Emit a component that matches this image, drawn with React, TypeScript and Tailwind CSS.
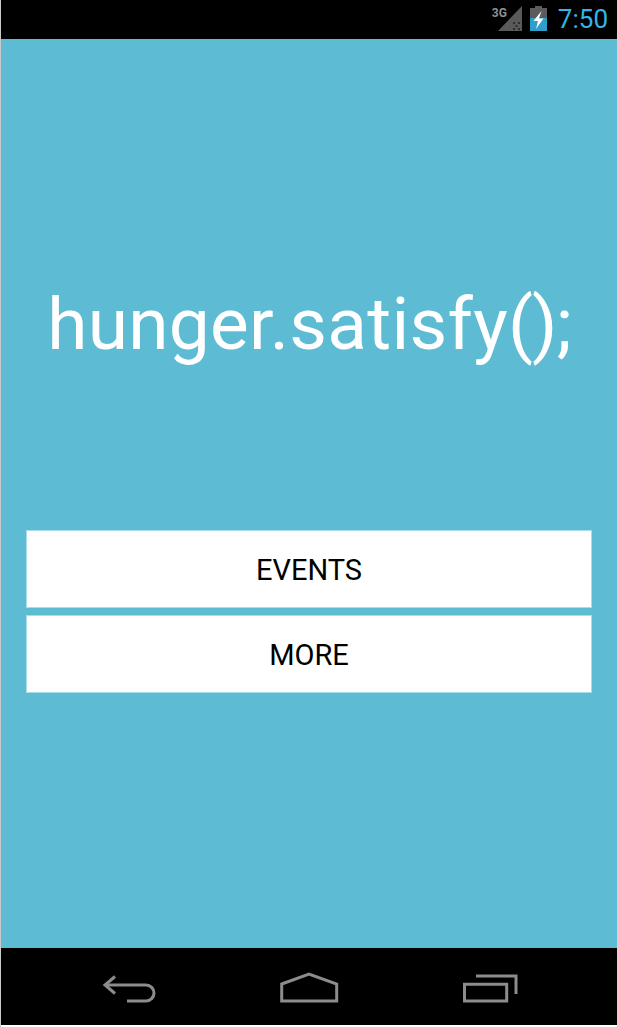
import React from 'react';

const StatusBar: React.FC = () => (
  <div className="h-[39px] bg-black flex items-start justify-end shrink-0">
    <div className="relative w-[30px] h-[30px] mt-[4px] mr-[7px]">
      <svg className="absolute inset-0" width="30" height="30" viewBox="0 0 30 30">
        <path d="M5 27 L29 2 V27 Z" fill="#5a5a5a" />
        <path d="M20 18h2v2h-2zM25 18h2v2h-2zM22.500 21h2v2h-2zM20 24h2v2h-2zM25 24h2v2h-2z" fill="#2e2e2e" />
      </svg>
      <span className="absolute left-[-1px] top-[2px] text-[12px] leading-[14px] font-bold text-[#8f8f8f]">3G</span>
    </div>
    <svg className="mt-[6px] mr-[11px]" width="17" height="25" viewBox="0 0 17 25">
      <path d="M5 0h7v2h5v23H0V2h5z" fill="#5c5c5c" />
      <path d="M0 12h17v13H0z" fill="#2f9fc9" />
      <path d="M11.500 5 L3.500 15 H8 L6 23 L13.500 12.500 H9 Z" fill="#ffffff" />
    </svg>
    <span className="mr-[9px] text-[26px] leading-[39px] text-[#33b5e5] font-normal">7:50</span>
  </div>
);

const NavBar: React.FC = () => (
  <div className="h-[77px] bg-black flex items-start shrink-0 pl-[101px]">
    <svg className="mt-[24px]" width="56" height="32" viewBox="0 0 56 32" fill="none" stroke="#8c8c8c" strokeWidth="3">
      <path d="M13 4.500 L3 13 L13 21.500" />
      <path d="M3 13 H44 A8 8 0 0 1 44 29 H25" />
    </svg>
    <svg className="mt-[24px] ml-[121px]" width="60" height="32" viewBox="0 0 60 32" fill="none" stroke="#8c8c8c" strokeWidth="3">
      <path d="M2.700 12 L30 2 L57.700 12 V29 H2.700 Z" />
    </svg>
    <svg className="mt-[24px] ml-[123px]" width="58" height="32" viewBox="0 0 58 32" fill="none" stroke="#8c8c8c" strokeWidth="3">
      <path d="M2.500 12.300 H44.700 V29 H2.500 Z" />
      <path d="M14 4 H54 V22" />
    </svg>
  </div>
);

export default function App() {
  return (
    <div className="w-[617px] h-[1027px] bg-white flex flex-col border-l border-[#c9c9c9] overflow-hidden font-['Roboto',sans-serif]">
      <StatusBar />
      <div className="flex-1 bg-[#5dbcd3] flex flex-col px-[25px]">
        <h1 className="mt-[240px] text-center text-[73px] leading-[90px] font-normal text-white whitespace-nowrap">
          <span className="tracking-[0.3px]">hunger.satisfy</span>
          <span className="tracking-[-1px]">();</span>
        </h1>
        <div className="mt-[161px] flex flex-col gap-[7px]">
          <button type="button" className="h-[78px] pt-[4px] bg-white text-black text-[29px] border border-[#a8dde9]">EVENTS</button>
          <button type="button" className="h-[78px] pt-[4px] bg-white text-black text-[29px] border border-[#a8dde9]">MORE</button>
        </div>
      </div>
      <NavBar />
      <div className="h-[2px] shrink-0 bg-white" />
    </div>
  );
}
